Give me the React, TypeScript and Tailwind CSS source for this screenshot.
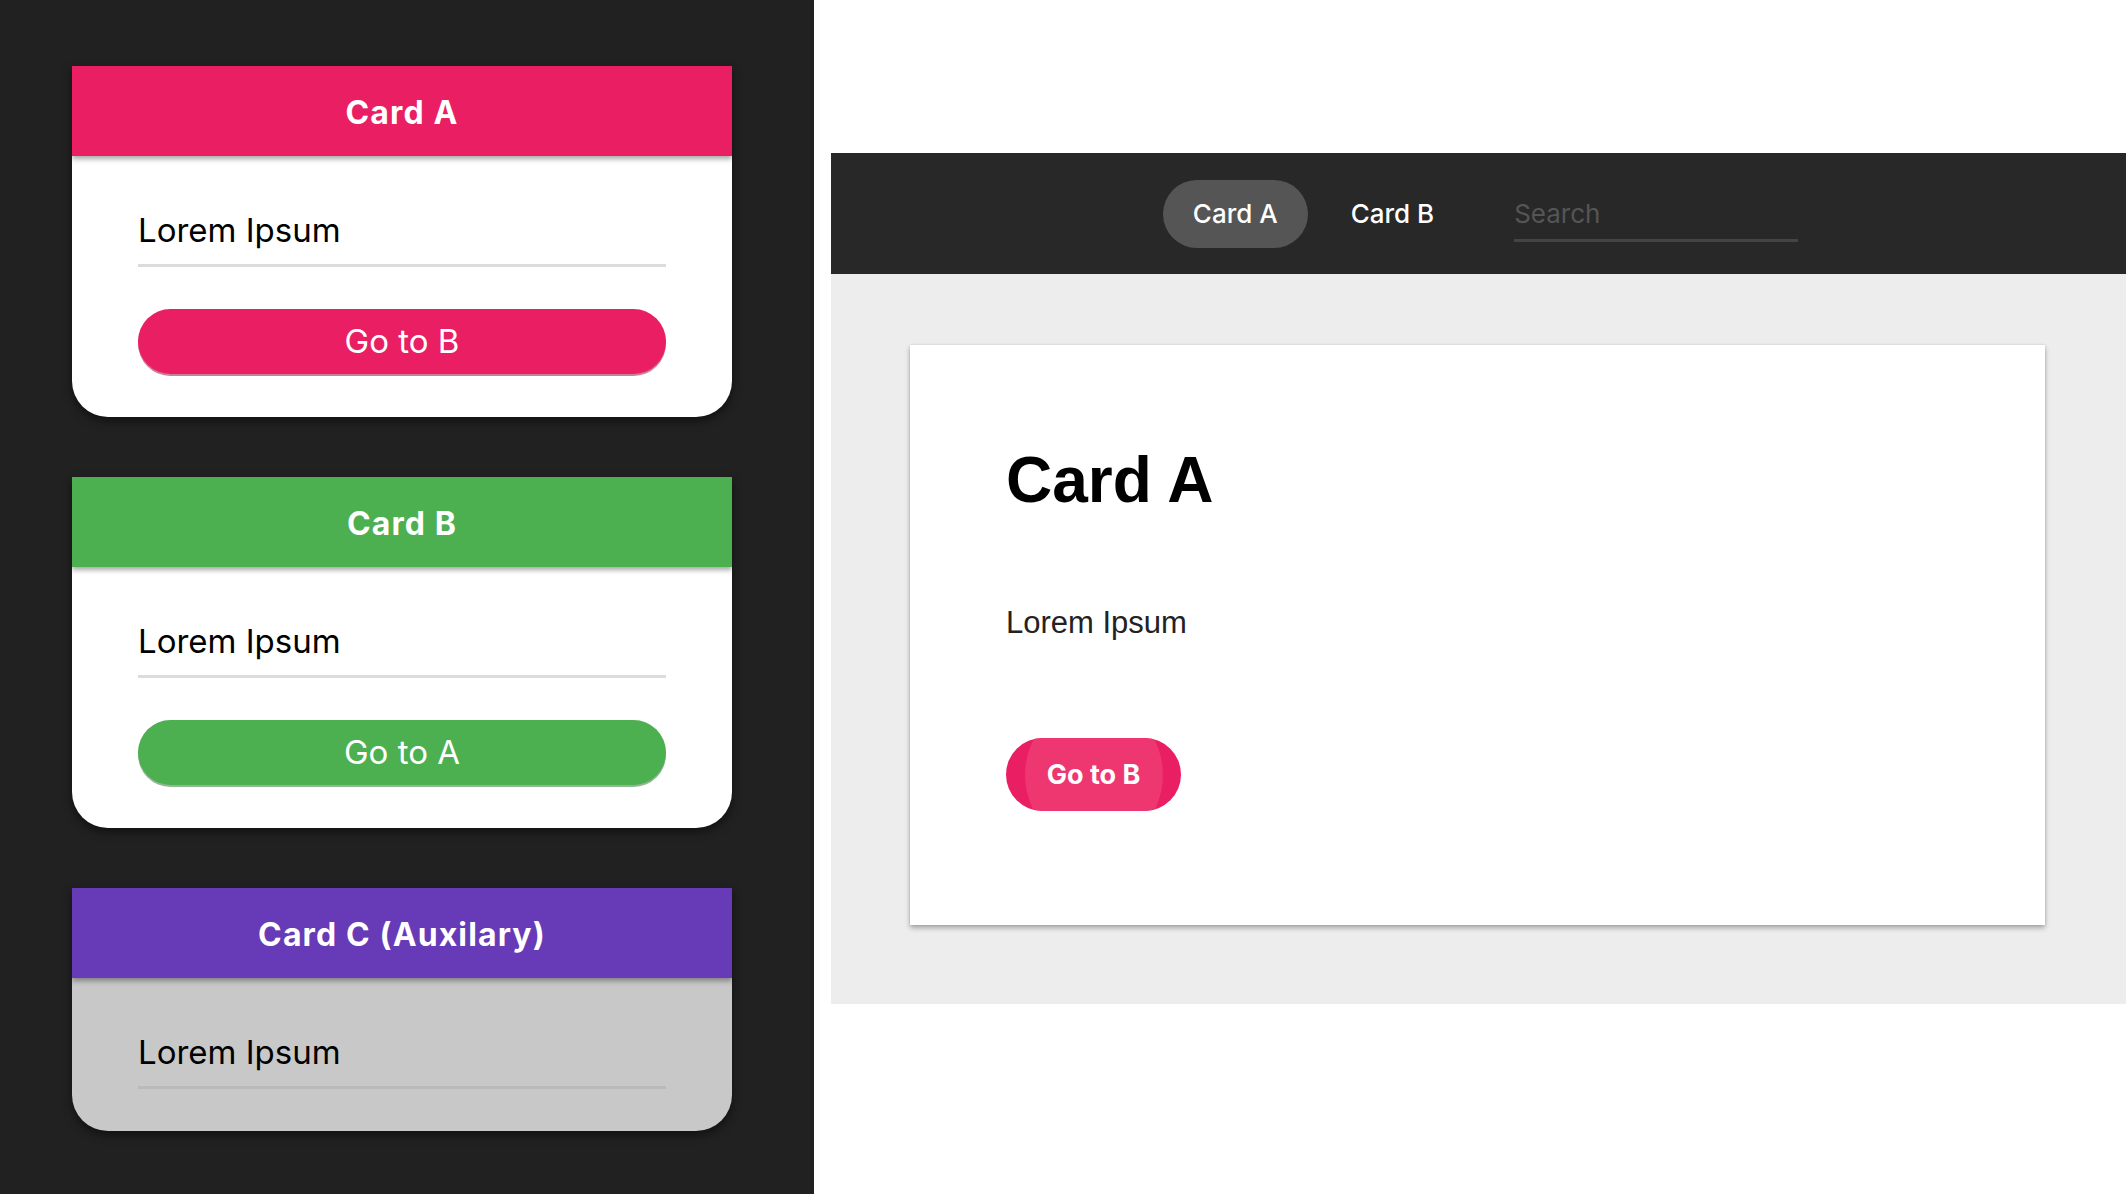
import React from 'react'

type SideCard = {
  title: string
  header: string
  body: string
  line: string
  action?: string
}

const SIDE_CARDS: SideCard[] = [
  { title: 'Card A', header: 'bg-[#e91e63]', body: 'bg-white', line: 'bg-[#dcdcdc]', action: 'Go to B' },
  { title: 'Card B', header: 'bg-[#4caf50]', body: 'bg-white', line: 'bg-[#dcdcdc]', action: 'Go to A' },
  { title: 'Card C (Auxilary)', header: 'bg-[#673ab7]', body: 'bg-[#c8c8c8]', line: 'bg-[#bababa]' },
]

const BUTTON_BG: Record<string, string> = {
  'Go to B': 'bg-[#e91e63] shadow-[0_2px_0_rgba(160,20,70,0.55)]',
  'Go to A': 'bg-[#4caf50] shadow-[0_2px_0_rgba(40,110,45,0.5)]',
}

function PhoneCard({ card }: { card: SideCard }) {
  return (
    <div
      className={`w-[660px] overflow-hidden rounded-b-[36px] ${card.body} shadow-[0_4px_10px_rgba(0,0,0,0.5)]`}
    >
      <div
        className={`relative z-10 flex h-[90px] items-center justify-center pt-[4px] ${card.header} shadow-[0_3px_5px_rgba(0,0,0,0.35)]`}
      >
        <span className="font-['Inter',sans-serif] text-[32px] leading-none font-bold tracking-[0.035em] text-white">
          {card.title}
        </span>
      </div>
      <div className={`pt-[58px] pl-[66px] pr-[66px] ${card.action ? 'pb-[43px]' : 'pb-[42px]'}`}>
        <p className="font-['Inter',sans-serif] text-[33px] leading-[33px] text-black">Lorem Ipsum</p>
        <div className={`mt-[17px] h-[3px] w-full ${card.line}`} />
        {card.action && (
          <button
            type="button"
            className={`mt-[42px] flex h-[65px] w-full items-center justify-center rounded-full ${BUTTON_BG[card.action]}`}
          >
            <span className="font-['Inter',sans-serif] text-[33px] leading-none text-white">{card.action}</span>
          </button>
        )}
      </div>
    </div>
  )
}

export default function App() {
  return (
    <div className="flex h-[1196px] w-[2126px] bg-white">
      {/* left: the phone mockup cards */}
      <div className="flex h-[1194px] w-[814px] flex-col gap-[60px] bg-[#212121] pt-[66px] pl-[72px]">
        {SIDE_CARDS.map((card) => (
          <PhoneCard key={card.title} card={card} />
        ))}
      </div>

      {/* right: web version */}
      <div className="ml-[17px] flex flex-1 flex-col pt-[153px]">
        <nav className="flex h-[121px] items-center justify-center bg-[#282828] pl-[4px] font-['Inter',sans-serif]">
          <button
            type="button"
            className="flex h-[68px] items-center rounded-full bg-[#555555] px-[30px] text-[26px] leading-none font-medium text-white"
          >
            Card A
          </button>
          <button
            type="button"
            className="ml-[13px] flex h-[68px] items-center rounded-full px-[30px] text-[26px] leading-none font-medium text-white"
          >
            Card B
          </button>
          <input
            placeholder="Search"
            className="mt-[13px] ml-[50px] w-[284px] border-b-[3px] border-[#444444] bg-transparent pb-[10px] text-[26px] leading-[26px] text-white outline-none placeholder:text-[#555555]"
          />
        </nav>

        <main className="h-[730px] bg-[#ededed] pt-[71px] pr-[81px] pl-[79px]">
          <div className="h-[580px] bg-white pt-[103px] pl-[96px] shadow-[0_3px_5px_rgba(0,0,0,0.3),0_0_2px_rgba(0,0,0,0.12)]">
            <h1 className="font-['Liberation_Sans',Arial,sans-serif] text-[64px] leading-[64px] font-bold text-black">
              Card A
            </h1>
            <p className="mt-[95px] font-['Liberation_Sans',Arial,sans-serif] text-[31px] leading-[31px] text-[#222222]">
              Lorem Ipsum
            </p>
            <button
              type="button"
              className="relative mt-[100px] flex h-[73px] w-[175px] items-center justify-center overflow-hidden rounded-full bg-[#e91e63]"
            >
              <span className="absolute top-1/2 left-1/2 h-[146px] w-[138px] -translate-x-1/2 -translate-y-1/2 rounded-[50%] bg-[#ee3670]" />
              <span className="relative font-['Inter',sans-serif] text-[27px] leading-none font-bold text-white">
                Go to B
              </span>
            </button>
          </div>
        </main>
      </div>
    </div>
  )
}
